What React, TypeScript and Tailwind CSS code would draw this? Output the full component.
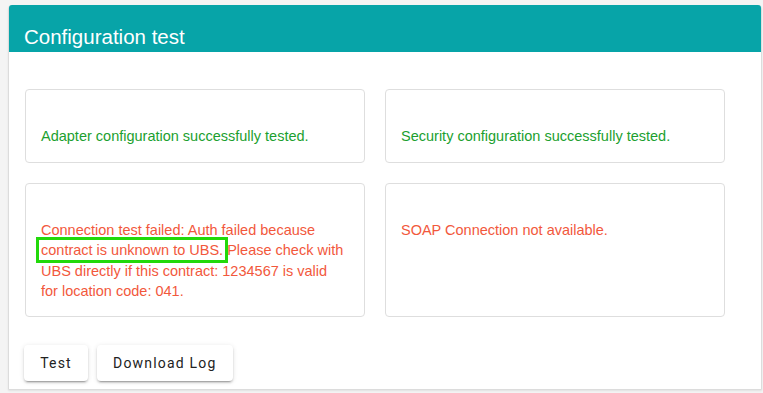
const ResultBox = ({children, ok}: {children: React.ReactNode; ok: boolean}) => (
    <div
        className={`rounded-[4px] border border-[#dedede] bg-white pt-[36px] pb-4 pl-[15px] pr-[17px] text-[14.5px] leading-[20.3px] ${
            ok ? "text-[#1c9f2f]" : "text-[#f2583c]"
        }`}
    >
        {children}
    </div>
);

const App = () => {
    return (
        <div className="min-h-[393px] bg-[#f4f4f4] pt-[5px] font-['Liberation_Sans',Arial,sans-serif]">
            <div className="ml-[8px] w-[754px] h-[385px] rounded-t-[4px] border border-[#dcdcdc] bg-white shadow-[0_1px_2px_rgba(0,0,0,0.08)] flex flex-col">
                <div className="h-[47px] -mt-px rounded-t-[3px] bg-[#07a4a8] pl-[15px] pt-[20px]">
                    <h2 className="text-[20.5px] leading-[24px] text-white">Configuration test</h2>
                </div>
                <div className="pl-[16px] pt-[37px] grid grid-cols-[340px_340px] grid-rows-[74px_134px] gap-x-[20px] gap-y-[20px]">
                    <ResultBox ok>Adapter configuration successfully tested.</ResultBox>
                    <ResultBox ok>Security configuration successfully tested.</ResultBox>
                    <ResultBox ok={false}>
                        Connection test failed: Auth failed because{" "}
                        <span className="outline-3 outline-offset-2 outline-[#22d90a]">contract is unknown to UBS.</span>{" "}
                        Please check with UBS directly if this contract: 1234567 is valid for location code: 041.
                    </ResultBox>
                    <ResultBox ok={false}>SOAP Connection not available.</ResultBox>
                </div>
                <div className="flex gap-[9px] pl-[15px] pt-[28px] font-['Roboto',sans-serif]">
                    <button className="h-[36px] min-w-[64px] rounded-[4px] bg-white px-4 text-[14px] tracking-[1.2px] text-[#222] shadow-[0_3px_1px_-2px_rgba(0,0,0,0.2),0_2px_2px_0_rgba(0,0,0,0.14),0_1px_5px_0_rgba(0,0,0,0.12)]">
                        Test
                    </button>
                    <button className="h-[36px] min-w-[64px] rounded-[4px] bg-white px-4 text-[14px] tracking-[1.2px] text-[#222] shadow-[0_3px_1px_-2px_rgba(0,0,0,0.2),0_2px_2px_0_rgba(0,0,0,0.14),0_1px_5px_0_rgba(0,0,0,0.12)]">
                        Download Log
                    </button>
                </div>
            </div>
        </div>
    );
}
export default App;
